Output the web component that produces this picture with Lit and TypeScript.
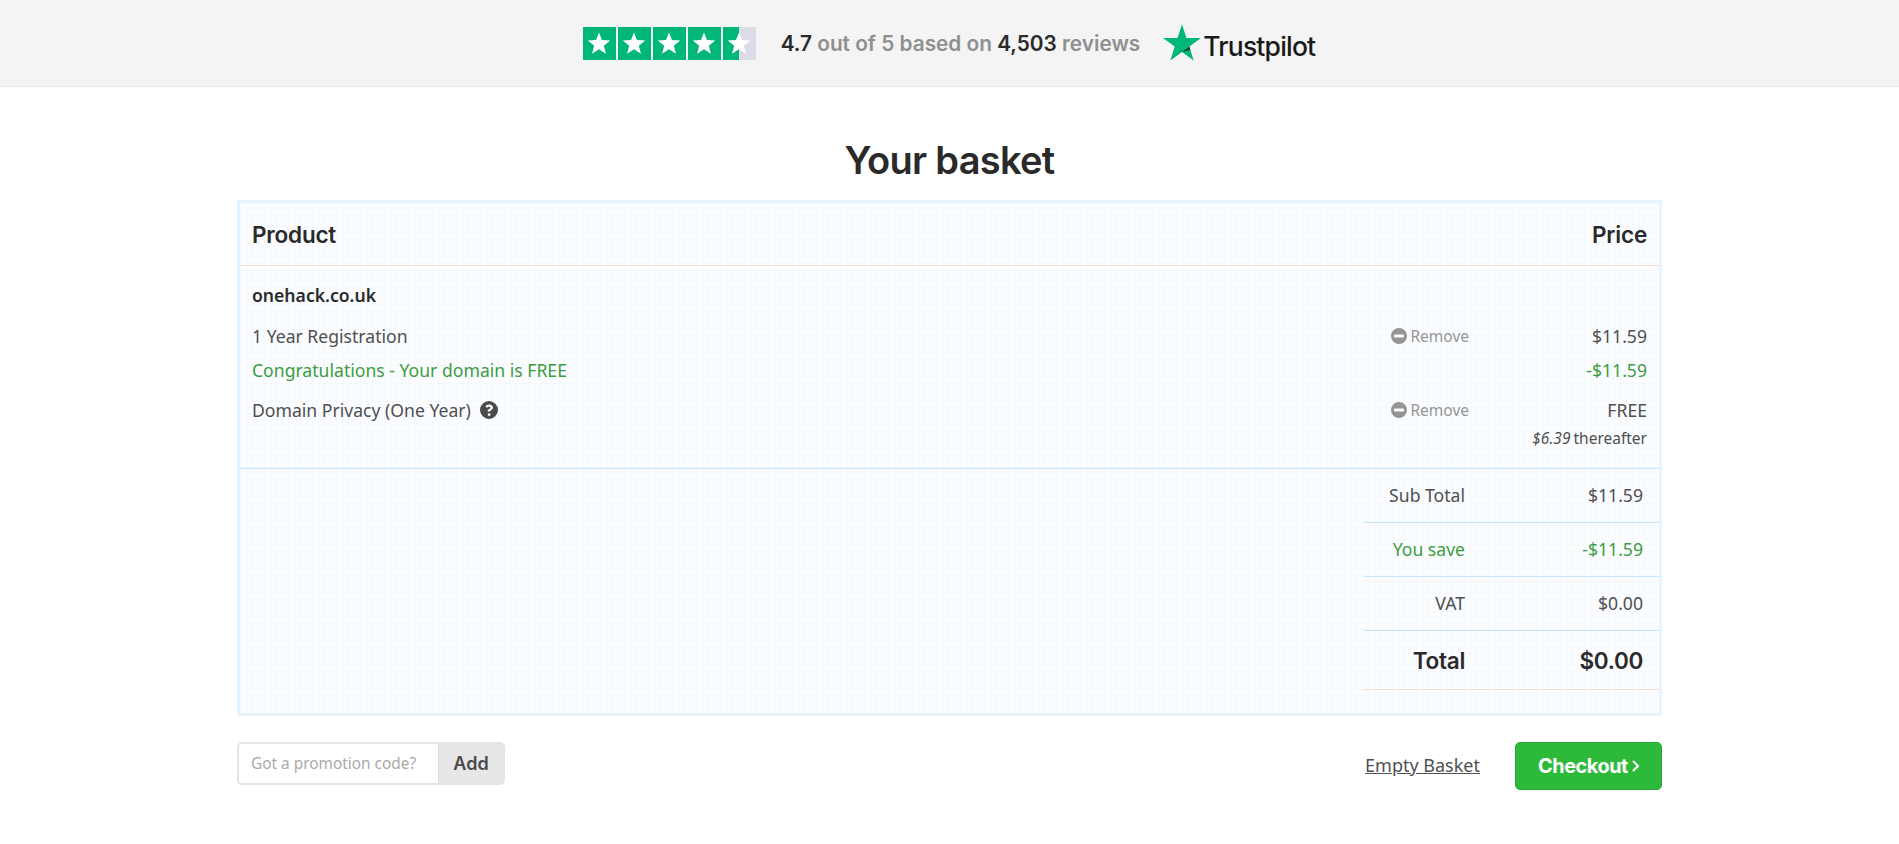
import { LitElement, html, css } from 'lit';
import { customElement } from 'lit/decorators.js';

const STAR = 'M12 2.2l2.75 7.1 7.6.42-5.9 4.82 1.95 7.36L12 17.8l-6.4 4.1 1.95-7.36-5.9-4.82 7.6-.42z';

@customElement('app-root')
export class AppRoot extends LitElement {
  static styles = css`
    :host {
      display: block;
      font-family: 'Noto Sans', 'Open Sans', sans-serif;
      font-size: 17.6px;
      color: #4f4f4f;
      background: #fff;
      min-height: 844px;
    }
    .review-bar {
      height: 86px;
      background: #f4f4f4;
      border-bottom: 1px solid #e5e5e5;
      display: flex;
      align-items: center;
      justify-content: center;
      padding-right: 1px;
    }
    .stars {
      display: flex;
      gap: 2px;
      margin-right: 25px;
    }
    .tile {
      width: 33px;
      height: 33px;
      background: #00b67a;
      display: flex;
      align-items: center;
      justify-content: center;
    }
    .tile.part {
      background: linear-gradient(90deg, #00b67a 50%, #dcdce6 50%);
    }
    .tile svg {
      width: 26px;
      height: 26px;
      fill: #fff;
    }
    .score {
      font-family: Inter, sans-serif;
      font-weight: 600;
      font-size: 20.8px;
      color: #8f8f8f;
      margin-right: 23px;
    }
    .score b {
      font-weight: 600;
      color: #2a2a2a;
    }
    .tp {
      display: flex;
      align-items: flex-end;
      font-family: Inter, sans-serif;
      font-weight: 500;
      font-size: 26.5px;
      letter-spacing: -0.8px;
      color: #191919;
    }
    .tp svg {
      width: 38px;
      height: 37px;
      margin-right: 2px;
      margin-bottom: 1px;
    }
    h1 {
      margin: 0;
      height: 113px;
      box-sizing: border-box;
      padding-top: 50px;
      text-align: center;
      font-family: Inter, sans-serif;
      font-weight: 600;
      font-size: 38px;
      letter-spacing: -0.7px;
      line-height: 46px;
      color: #2a2a2a;
    }
    .page {
      width: 1425px;
      margin-left: 237px;
    }
    .panel {
      height: 516px;
      box-sizing: border-box;
      border: 3px solid #e6f4ff;
      background-color: #fbfdff;
      background-image:
        linear-gradient(#f5f9fd 1px, transparent 1px),
        linear-gradient(90deg, #f5f9fd 1px, transparent 1px);
      background-size: 6px 6px;
    }
    .head {
      height: 62px;
      border-bottom: 1px solid #fbdcc8;
      display: flex;
      justify-content: space-between;
      align-items: center;
      padding: 0 12px;
      font-family: Inter, sans-serif;
      font-weight: 600;
      font-size: 22.5px;
      letter-spacing: -0.2px;
      color: #2a2a2a;
    }
    .items {
      height: 203px;
      box-sizing: border-box;
      border-bottom: 1px solid #c5e5fb;
      padding: 15px 12px 0;
    }
    .domain {
      font-weight: 600;
      color: #2a2a2a;
      line-height: 28px;
      margin-bottom: 10px;
    }
    .line {
      display: grid;
      grid-template-columns: 1fr auto 178px;
      line-height: 34px;
    }
    .line.privacy {
      margin-top: 6px;
    }
    .green {
      color: #3d9c3f;
    }
    .remove {
      display: flex;
      align-items: center;
      gap: 3px;
      color: #959595;
      font-size: 15.5px;
    }
    .remove svg {
      width: 16px;
      height: 16px;
      fill: #959595;
    }
    .price {
      text-align: right;
    }
    .label {
      display: flex;
      align-items: center;
      gap: 9px;
    }
    .label svg {
      width: 18px;
      height: 18px;
      fill: #4a4a4a;
    }
    .after {
      text-align: right;
      font-size: 15.5px;
      line-height: 23px;
      word-spacing: -1px;
    }
    .totals {
      width: 295px;
      margin-left: auto;
    }
    .total-row {
      display: grid;
      grid-template-columns: 101px 178px;
      height: 54px;
      padding-bottom: 2px;
      align-items: center;
      text-align: right;
      box-sizing: border-box;
      border-bottom: 1px solid #c5e5fb;
    }
    .total-row.grand {
      height: 59px;
      padding-bottom: 0;
      border-bottom-color: #fbdcc8;
      font-family: Inter, sans-serif;
      font-weight: 600;
      font-size: 22.5px;
      letter-spacing: -0.3px;
      color: #2a2a2a;
    }
    .actions {
      display: flex;
      align-items: flex-start;
      margin-top: 26px;
    }
    .promo {
      display: flex;
      width: 268px;
      height: 43px;
      box-sizing: border-box;
      border: 2px solid #e4e4e4;
      border-radius: 5px;
      overflow: hidden;
    }
    .promo input {
      flex: 1;
      min-width: 0;
      border: 0;
      outline: 0;
      padding: 0 12px;
      font: inherit;
      font-size: 15.4px;
      background: #fff;
    }
    .promo input::placeholder {
      color: #aaa;
    }
    .promo button {
      width: 65px;
      border: 0;
      border-left: 1px solid #dcdcdc;
      background: #e7e7e7;
      font-family: Inter, sans-serif;
      font-weight: 600;
      font-size: 18px;
      color: #4a4a4a;
      padding: 0;
    }
    .empty {
      margin-left: auto;
      margin-right: 35px;
      font-size: 18px;
      line-height: 46px;
      color: #4f4f4f;
    }
    .checkout {
      width: 147px;
      height: 48px;
      box-sizing: border-box;
      border: 1px solid #28a738;
      border-radius: 5px;
      background: #2dba3b;
      color: #fff;
      font-family: Inter, sans-serif;
      font-weight: 700;
      font-size: 19.8px;
      letter-spacing: -0.4px;
      padding: 0;
      display: flex;
      align-items: center;
      justify-content: center;
      gap: 4px;
    }
    .checkout svg {
      width: 7px;
      height: 12px;
      fill: none;
      stroke: #fff;
      stroke-width: 2;
    }
  `;

  minus() {
    return html`<svg viewBox="0 0 16 16"><path fill-rule="evenodd" d="M8 0a8 8 0 1 1 0 16A8 8 0 0 1 8 0zM4 6.500a1 1 0 0 0-1 1v1a1 1 0 0 0 1 1h8a1 1 0 0 0 1-1v-1a1 1 0 0 0-1-1z"/></svg>`;
  }

  render() {
    const star = html`<svg viewBox="0 0 24 24"><path d=${STAR} /></svg>`;
    return html`
      <div class="review-bar">
        <div class="stars">
          <span class="tile">${star}</span>
          <span class="tile">${star}</span>
          <span class="tile">${star}</span>
          <span class="tile">${star}</span>
          <span class="tile part">${star}</span>
        </div>
        <div class="score"><b>4.7</b> out of 5 based on <b>4,503</b> reviews</div>
        <div class="tp">
          <svg viewBox="0 0 24 23"><path fill="#00b67a" d="M12 0l2.800 8.700H24l-7.400 5.400 2.800 8.800L12 17.500l-7.400 5.400 2.800-8.800L0 8.700h9.200z"/><path fill="#005128" d="M16.600 14.100l.7 2.100-5.300 1.300z"/></svg>
          <span>Trustpilot</span>
        </div>
      </div>
      <h1>Your basket</h1>
      <div class="page">
        <div class="panel">
          <div class="head"><span>Product</span><span>Price</span></div>
          <div class="items">
            <div class="domain">onehack.co.uk</div>
            <div class="line">
              <span>1 Year Registration</span>
              <span class="remove">${this.minus()}Remove</span>
              <span class="price">$11.59</span>
            </div>
            <div class="line green">
              <span>Congratulations - Your domain is FREE</span>
              <span></span>
              <span class="price">-$11.59</span>
            </div>
            <div class="line privacy">
              <span class="label">Domain Privacy (One Year)
                <svg viewBox="0 0 16 16"><path fill-rule="evenodd" d="M8 0a8 8 0 1 1 0 16A8 8 0 0 1 8 0zM8.200 3C6.600 3 5.500 3.700 4.800 4.900l1.500 1.100c.4-.6.900-1 1.700-1 .7 0 1.200.4 1.200.9 0 .5-.4.800-1 1.100-.8.400-1.400 1-1.400 2v.4h2.200c0-.5.100-.8.800-1.200.9-.5 1.700-1.200 1.700-2.400C11.500 4 9.900 3 8.200 3zM7 11v2h2.200v-2z"/></svg>
              </span>
              <span class="remove">${this.minus()}Remove</span>
              <span class="price">FREE</span>
            </div>
            <div class="after"><i>$6.39</i> thereafter</div>
          </div>
          <div class="totals">
            <div class="total-row"><span>Sub Total</span><span>$11.59</span></div>
            <div class="total-row green"><span>You save</span><span>-$11.59</span></div>
            <div class="total-row"><span>VAT</span><span>$0.00</span></div>
            <div class="total-row grand"><span>Total</span><span>$0.00</span></div>
          </div>
        </div>
        <div class="actions">
          <div class="promo">
            <input placeholder="Got a promotion code?" />
            <button>Add</button>
          </div>
          <a class="empty" href="#">Empty Basket</a>
          <button class="checkout">Checkout<svg viewBox="0 0 7 12"><path d="M1 1l5 5-5 5"/></svg></button>
        </div>
      </div>
    `;
  }
}
